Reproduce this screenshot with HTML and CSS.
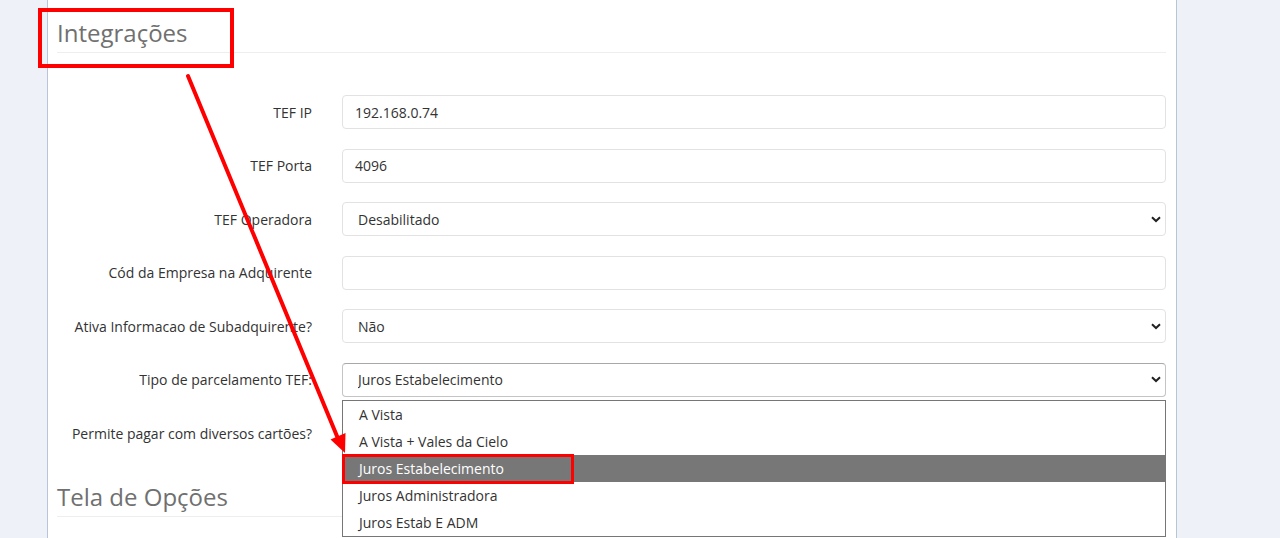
FILE: index.html
```html
<!DOCTYPE html>
<html lang="pt-BR">
<head>
    <meta charset="UTF-8">
    <title>Integrações</title>
    <link rel="stylesheet" href="styles.css">
</head>
<body>
    <div class="page">
        <div class="panel">
            <h2 class="section-title">Integrações</h2>

            <form class="form">
                <div class="form-row">
                    <label for="tefIp">TEF IP</label>
                    <div class="field"><input type="text" id="tefIp" value="192.168.0.74"></div>
                </div>
                <div class="form-row">
                    <label for="tefPorta">TEF Porta</label>
                    <div class="field"><input type="text" id="tefPorta" value="4096"></div>
                </div>
                <div class="form-row">
                    <label for="tefOperadora">TEF Operadora</label>
                    <div class="field">
                        <select id="tefOperadora"><option>Desabilitado</option></select>
                    </div>
                </div>
                <div class="form-row">
                    <label for="codEmpresa">Cód da Empresa na Adquirente</label>
                    <div class="field"><input type="text" id="codEmpresa" value=""></div>
                </div>
                <div class="form-row">
                    <label for="subadq">Ativa Informacao de Subadquirente?</label>
                    <div class="field">
                        <select id="subadq"><option>Não</option></select>
                    </div>
                </div>
                <div class="form-row">
                    <label for="parcelamento">Tipo de parcelamento TEF:</label>
                    <div class="field">
                        <select id="parcelamento" class="open"><option>Juros Estabelecimento</option></select>
                        <ul class="dropdown">
                            <li>A Vista</li>
                            <li>A Vista + Vales da Cielo</li>
                            <li class="selected">Juros Estabelecimento</li>
                            <li>Juros Administradora</li>
                            <li>Juros Estab E ADM</li>
                        </ul>
                    </div>
                </div>
                <div class="form-row">
                    <label for="diversos">Permite pagar com diversos cartões?</label>
                    <div class="field">
                        <select id="diversos"><option>Não</option></select>
                    </div>
                </div>
            </form>

            <h2 class="section-title second">Tela de Opções</h2>
        </div>

        <!-- marcações em vermelho -->
        <svg class="marks" width="1280" height="538" viewBox="0 0 1280 538">
            <rect x="40" y="10" width="192" height="56" fill="none" stroke="#ff0000" stroke-width="4"/>
            <line x1="188" y1="76" x2="339" y2="441" stroke="#ff0000" stroke-width="4" stroke-linecap="round"/>
            <polygon points="345,453 345.5,433 330.5,439.5" fill="#ff0000"/>
            <rect x="343.5" y="455.5" width="229" height="27" fill="none" stroke="#ff0000" stroke-width="3"/>
        </svg>
    </div>
</body>
</html>
```

FILE: styles.css
```css
body {
    margin: 0;
    background-color: #eef1f7;
    font-family: 'Open Sans', 'Liberation Sans', Arial, sans-serif;
    font-size: 14px;
    color: #333;
    overflow: hidden;
}

.page {
    position: relative;
    height: 538px;
}

.panel {
    margin-left: 47px;
    width: 1109px;
    height: 538px;
    background: #ffffff;
    border-left: 1px solid #b9c4d6;
    border-right: 1px solid #b9c4d6;
    padding: 0 10px 0 9px;
}

.section-title {
    margin: 0;
    padding-top: 17px;
    padding-bottom: 3px;
    font-size: 24px;
    line-height: 32px;
    font-weight: 400;
    color: #707070;
    border-bottom: 1px solid #eeeeee;
}

.section-title.second {
    padding-top: 30px;
}

.form {
    margin-top: 42px;
    display: flex;
    flex-direction: column;
    gap: 19.6px;
}

.form-row {
    display: flex;
    align-items: center;
}

.form-row label {
    flex: 0 0 285px;
    text-align: right;
    padding-right: 30px;
    box-sizing: border-box;
    white-space: nowrap;
}

.field {
    position: relative;
    flex: 1;
}

input,
select {
    display: block;
    width: 100%;
    height: 34px;
    box-sizing: border-box;
    border: 1px solid #e2e2e2;
    border-radius: 4px;
    background-color: #fff;
    font-family: inherit;
    font-size: 14px;
    color: #333;
    padding: 0 12px;
    margin: 0;
}

select {
    appearance: none;
    -webkit-appearance: none;
    padding-left: 15px;
    background-image: url("data:image/svg+xml,%3Csvg xmlns='http://www.w3.org/2000/svg' width='10' height='7' viewBox='0 0 10 7'%3E%3Cpath d='M1 1.2 L5 5 L9 1.2' fill='none' stroke='%23222' stroke-width='2'/%3E%3C/svg%3E");
    background-repeat: no-repeat;
    background-position: right 4px center;
}

select.open {
    border-color: #c4c4c4;
    border-top-color: #a8a8a8;
}

.dropdown {
    position: absolute;
    top: 37px;
    left: 0;
    right: 0;
    margin: 0;
    padding: 0;
    list-style: none;
    background: #fff;
    border: 1px solid #767676;
    z-index: 5;
}

.dropdown li {
    height: 27px;
    line-height: 27px;
    padding-left: 16px;
    color: #333;
}

.dropdown li.selected {
    background: #777777;
    color: #fff;
}

.marks {
    position: absolute;
    top: 0;
    left: 0;
    pointer-events: none;
    z-index: 10;
}
```
